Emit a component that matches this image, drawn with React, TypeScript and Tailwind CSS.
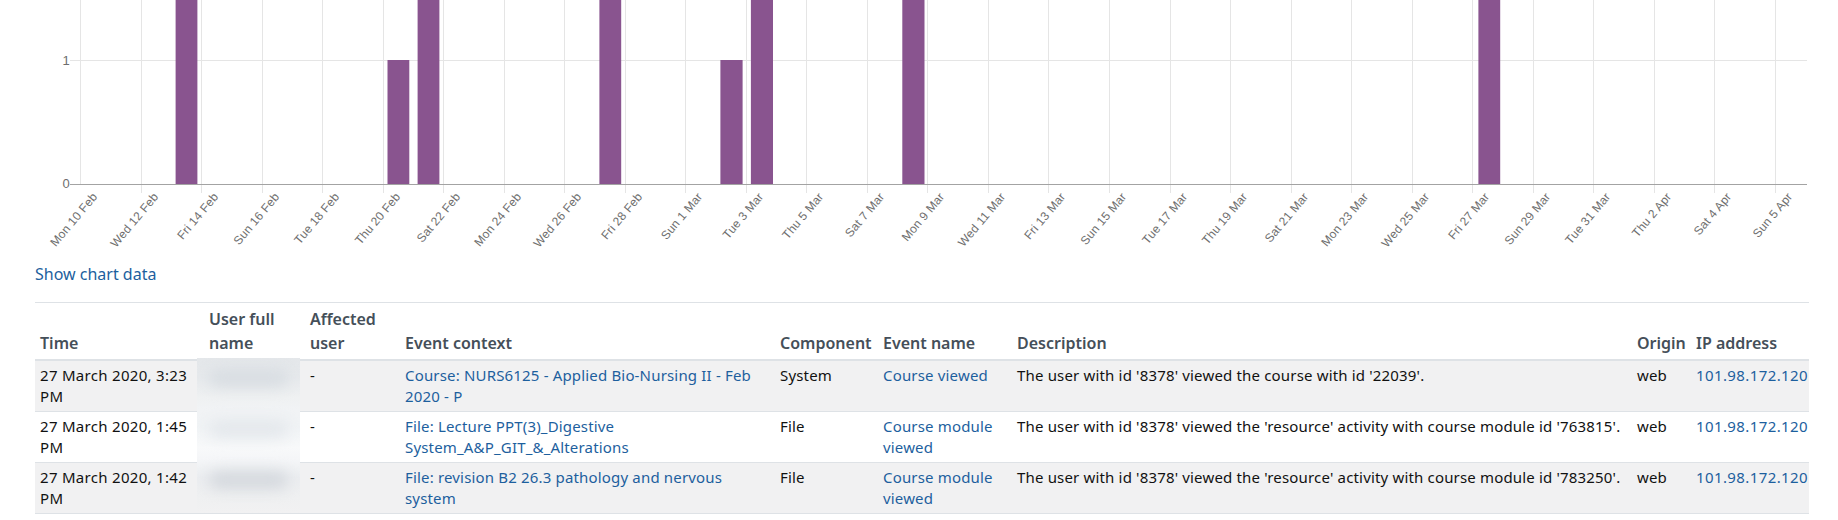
const FONT = "font-['Noto_Sans',sans-serif]";

const ticks: [number, string][] = [
  [0, "Mon 10 Feb"], [1, "Wed 12 Feb"], [2, "Fri 14 Feb"], [3, "Sun 16 Feb"], [4, "Tue 18 Feb"],
  [5, "Thu 20 Feb"], [6, "Sat 22 Feb"], [7, "Mon 24 Feb"], [8, "Wed 26 Feb"], [9, "Fri 28 Feb"],
  [10, "Sun 1 Mar"], [11, "Tue 3 Mar"], [12, "Thu 5 Mar"], [13, "Sat 7 Mar"], [14, "Mon 9 Mar"],
  [15, "Wed 11 Mar"], [16, "Fri 13 Mar"], [17, "Sun 15 Mar"], [18, "Tue 17 Mar"], [19, "Thu 19 Mar"],
  [20, "Sat 21 Mar"], [21, "Mon 23 Mar"], [22, "Wed 25 Mar"], [23, "Fri 27 Mar"], [24, "Sun 29 Mar"],
  [25, "Tue 31 Mar"], [26, "Thu 2 Apr"], [27, "Sat 4 Apr"], [28, "Sun 5 Apr"],
];

const bars: [number, number, number][] = [
  [175.6, 197.4, 0], [387.5, 409.3, 60], [417.6, 439.4, 0], [599.4, 621.2, 0],
  [720.4, 742.6, 60], [750.9, 773, 0], [902.3, 924.5, 0], [1478.4, 1500.2, 0],
];

function Chart() {
  return (
    <svg width="1838" height="250" viewBox="0 0 1838 250" className="block">
      <line x1="70" x2="1807" y1="60.5" y2="60.5" stroke="#e5e5e5" />
      {ticks.map(([i]) => {
        const x = Math.round(80 + i * 60.53) + 0.5;
        return <line key={i} x1={x} x2={x} y1="0" y2={i === 0 ? 184 : 193} stroke="#e5e5e5" />;
      })}
      {bars.map(([a, b, top]) => (
        <rect key={a} x={a} width={b - a} y={top} height={184 - top} fill="#89548f" />
      ))}
      <line x1="70" x2="1807" y1="184.5" y2="184.5" stroke="#a3a3a3" />
      <text x="70" y="64.5" textAnchor="end" fontSize="13" fill="#6e6e6e" fontFamily="Liberation Sans, sans-serif">1</text>
      <text x="70" y="188" textAnchor="end" fontSize="13" fill="#6e6e6e" fontFamily="Liberation Sans, sans-serif">0</text>
      {ticks.map(([i, label]) => {
        const x = Math.round(80 + i * 60.53) + 18;
        return (
          <text key={label} transform={`translate(${x} 197) rotate(-50)`} textAnchor="end" fontSize="12" fill="#6e6e6e" fontFamily="Liberation Sans, sans-serif">
            {label}
          </text>
        );
      })}
    </svg>
  );
}

const rows = [
  {
    time: "27 March 2020, 3:23 PM",
    ctx: "Course: NURS6125 - Applied Bio-Nursing II - Feb 2020 - P",
    comp: "System",
    ev: "Course viewed",
    desc: "The user with id '8378' viewed the course with id '22039'.",
  },
  {
    time: "27 March 2020, 1:45 PM",
    ctx: "File: Lecture PPT(3)_Digestive System_A&P_GIT_&_Alterations",
    comp: "File",
    ev: "Course module viewed",
    desc: "The user with id '8378' viewed the 'resource' activity with course module id '763815'.",
  },
  {
    time: "27 March 2020, 1:42 PM",
    ctx: "File: revision B2 26.3 pathology and nervous system",
    comp: "File",
    ev: "Course module viewed",
    desc: "The user with id '8378' viewed the 'resource' activity with course module id '783250'.",
  },
];

const blurBands = ["bg-[#d8dde2]", "bg-[#e4e8ec]", "bg-[#d5d9de]"];

export default function App() {
  return (
    <div className={`w-[1838px] h-[520px] overflow-hidden bg-white ${FONT} text-[15px] leading-[21px] tracking-[0.17px] text-[#111111]`}>
      <Chart />
      <a className="block ml-[35px] mt-[13px] text-[16px] leading-[22px] tracking-normal text-[#1d5f9e]">Show chart data</a>
      <div className="relative ml-[35px] mt-[17px] w-[1774px]">
        <table className="table-fixed w-full border-collapse border-t border-[#dee2e6]">
          <thead>
            <tr className="border-b-2 border-[#dee2e6] text-left align-bottom text-[16px] leading-[24px] tracking-normal text-[#454f59]">
              <th className="w-[170px] px-[5px] pb-[4px] font-semibold">Time</th>
              <th className="w-[100px] pl-[4px] pb-[4px] pt-[4px] font-semibold">User full name</th>
              <th className="w-[95px] pl-[5px] pb-[4px] font-semibold">Affected user</th>
              <th className="w-[375px] pl-[5px] pb-[4px] font-semibold">Event context</th>
              <th className="w-[103px] pl-[5px] pb-[4px] font-semibold">Component</th>
              <th className="w-[134px] pl-[5px] pb-[4px] font-semibold">Event name</th>
              <th className="w-[620px] pl-[5px] pb-[4px] font-semibold">Description</th>
              <th className="w-[59px] pl-[5px] pb-[4px] font-semibold">Origin</th>
              <th className="pl-[5px] pb-[4px] font-semibold">IP address</th>
            </tr>
          </thead>
          <tbody>
            {rows.map((r, i) => (
              <tr key={r.time} className={`h-[51px] border-b border-[#dee2e6] align-top ${i % 2 === 0 ? "bg-[#f1f1f2]" : "bg-white"}`}>
                <td className="px-[5px] py-[4px] tracking-[0.3px]">{r.time}</td>
                <td></td>
                <td className="pl-[5px] py-[4px]">-</td>
                <td className="pl-[5px] pr-[8px] py-[4px] text-[#1d5f9e]">{r.ctx}</td>
                <td className="pl-[5px] py-[4px]">{r.comp}</td>
                <td className="pl-[5px] pr-[4px] py-[4px] text-[#1d5f9e]">{r.ev}</td>
                <td className="pl-[5px] py-[4px]">{r.desc}</td>
                <td className="pl-[5px] py-[4px]">web</td>
                <td className="pl-[5px] py-[4px] tracking-[0.4px] text-[#1d5f9e]">101.98.172.120</td>
              </tr>
            ))}
          </tbody>
        </table>
        <div className="absolute left-[162px] top-[56px] w-[103px] h-[155px] flex flex-col pt-[11px] gap-[33px] px-[12px] overflow-hidden bg-[linear-gradient(180deg,#e4e7ea_0%,#e6e9ec_12%,#eff1f2_26%,#f1f3f5_33%,#f0f3f5_44%,#f8f9fa_58%,#f5f6f8_65%,#ebedf0_77%,#eff0f1_90%,#f1f1f2_100%)]">
          {blurBands.map((c, i) => (
            <div key={i} className={`h-[18px] rounded-full blur-[7px] ${c}`} />
          ))}
        </div>
      </div>
    </div>
  );
}
